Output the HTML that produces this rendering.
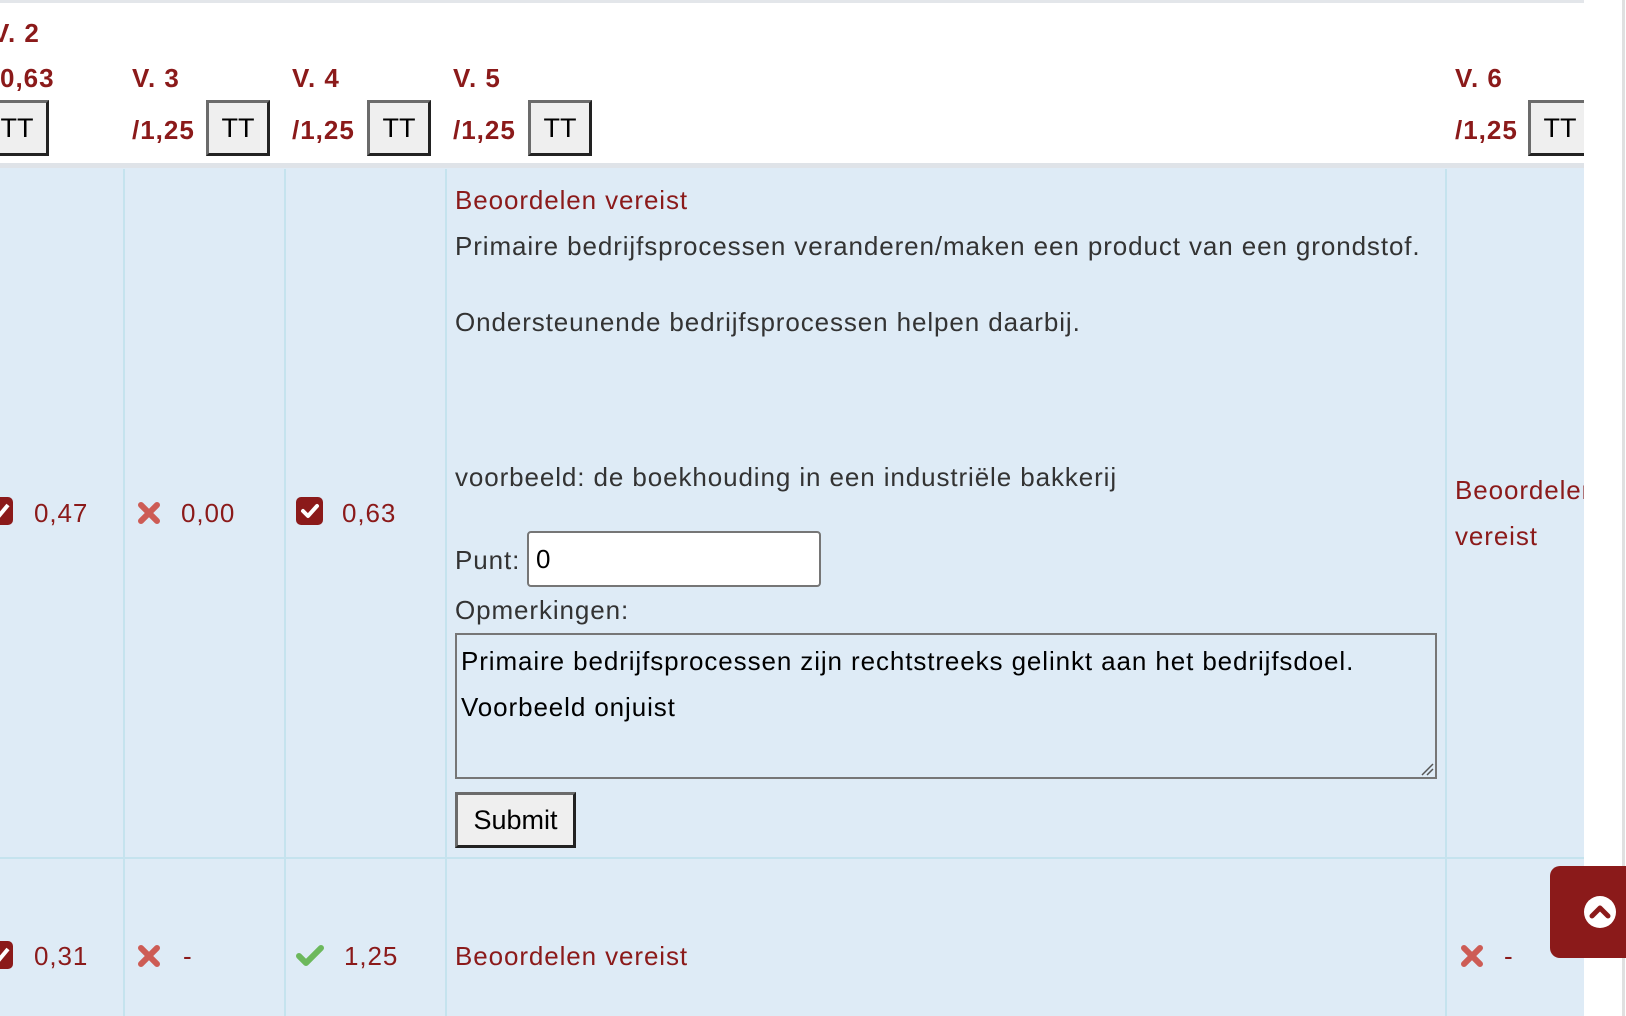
<!DOCTYPE html>
<html><head><meta charset="utf-8"><style>
body{margin:0;width:1626px;height:1016px;overflow:hidden;background:#fff;font-family:"Liberation Sans",sans-serif;position:relative}
.clip{position:absolute;left:0;top:0;width:1584px;height:1016px;overflow:hidden}
.a{position:absolute;white-space:nowrap}
.h{color:#8b1a1a;font-weight:bold;font-size:26px;line-height:30px;letter-spacing:1px}
.t{font-size:26px;line-height:30px;color:#333;letter-spacing:0.9px}
.r{color:#8b1a1a}
.btn{position:absolute;box-sizing:border-box;height:56px;width:64px;background:#efefef;border:3px solid;border-color:#6b6b6b #222 #222 #6b6b6b;font-size:27px;line-height:50px;text-align:center;color:#000}
.vl{position:absolute;top:169px;width:2px;height:847px;background:#c5e3ee}
</style></head><body>
<div class="clip">
<div class="a" style="left:0;top:0;width:1584px;height:3px;background:#e3e6ea"></div>
<div class="a" style="left:0;top:166px;width:1584px;height:850px;background:#deebf6"></div>
<div class="a" style="left:0;top:163px;width:1584px;height:5px;background:#dfe3e8"></div>
<div class="vl" style="left:123px"></div><div class="vl" style="left:284px"></div><div class="vl" style="left:445px"></div><div class="vl" style="left:1445px"></div>
<div class="a" style="left:0;top:857px;width:1584px;height:2px;background:#c5e3ee"></div>

<div class="a h" style="left:-8px;top:18px">V. 2</div>
<div class="a h" style="left:0;top:63px">0,63</div>
<div class="btn" style="left:-15px;top:100px">TT</div>
<div class="a h" style="left:132px;top:63px">V. 3</div>
<div class="a h" style="left:132px;top:115px">/1,25</div>
<div class="btn" style="left:206px;top:100px">TT</div>
<div class="a h" style="left:292px;top:63px">V. 4</div>
<div class="a h" style="left:292px;top:115px">/1,25</div>
<div class="btn" style="left:367px;top:100px">TT</div>
<div class="a h" style="left:453px;top:63px">V. 5</div>
<div class="a h" style="left:453px;top:115px">/1,25</div>
<div class="btn" style="left:528px;top:100px">TT</div>
<div class="a h" style="left:1455px;top:63px">V. 6</div>
<div class="a h" style="left:1455px;top:115px">/1,25</div>
<div class="btn" style="left:1528px;top:100px;width:64px">TT</div>

<div class="a" style="left:-14px;top:497px;width:27px;height:28px;border-radius:5px;background:#8b1a1a"></div>
<svg class="a" style="left:-4px;top:502px" width="14" height="18"><path d="M2 15L12 3" stroke="#fff" stroke-width="4"/></svg>
<div class="a t r" style="left:34px;top:498px">0,47</div>
<svg class="a" style="left:137px;top:501px" width="24" height="24"><path d="M4 4L20 20M20 4L4 20" stroke="#cd5c55" stroke-width="6" stroke-linecap="round"/></svg>
<div class="a t r" style="left:181px;top:498px">0,00</div>
<div class="a" style="left:296px;top:497px;width:27px;height:28px;border-radius:5px;background:#8b1a1a"></div>
<svg class="a" style="left:296px;top:497px" width="27" height="28"><path d="M7 14L12 19L21 9" fill="none" stroke="#fff" stroke-width="4" stroke-linecap="round" stroke-linejoin="round"/></svg>
<div class="a t r" style="left:342px;top:498px">0,63</div>

<div class="a t r" style="left:455px;top:185px">Beoordelen vereist</div>
<div class="a t" style="left:455px;top:231px">Primaire bedrijfsprocessen veranderen/maken een product van een grondstof.</div>
<div class="a t" style="left:455px;top:307px">Ondersteunende bedrijfsprocessen helpen daarbij.</div>
<div class="a t" style="left:455px;top:462px">voorbeeld: de boekhouding in een industriële bakkerij</div>
<div class="a t" style="left:455px;top:545px">Punt:</div>
<div class="a" style="left:527px;top:531px;width:294px;height:56px;box-sizing:border-box;border:2px solid #767676;border-radius:4px;background:#fff;font-size:26px;line-height:52px;padding-left:7px;color:#000">0</div>
<div class="a t" style="left:455px;top:595px">Opmerkingen:</div>
<div class="a" style="left:455px;top:633px;width:982px;height:146px;box-sizing:border-box;border:2px solid #767676;background:#deebf6;font-size:26px;line-height:46px;padding:3px 4px;color:#000;white-space:normal;letter-spacing:0.9px">Primaire bedrijfsprocessen zijn rechtstreeks gelinkt aan het bedrijfsdoel.<br>Voorbeeld onjuist</div>
<svg class="a" style="left:1420px;top:762px" width="14" height="14"><path d="M2 13L13 2M7 13L13 7" stroke="#555" stroke-width="1.5"/></svg>
<div class="a" style="left:455px;top:792px;width:121px;height:56px;box-sizing:border-box;background:#efefef;border:3px solid;border-color:#6b6b6b #222 #222 #6b6b6b;font-size:27px;line-height:50px;text-align:center;color:#000">Submit</div>

<div class="a t r" style="left:1455px;top:475px">Beoordelen</div>
<div class="a t r" style="left:1455px;top:521px">vereist</div>

<div class="a" style="left:-14px;top:941px;width:27px;height:28px;border-radius:5px;background:#8b1a1a"></div>
<svg class="a" style="left:-4px;top:946px" width="14" height="18"><path d="M2 15L12 3" stroke="#fff" stroke-width="4"/></svg>
<div class="a t r" style="left:34px;top:941px">0,31</div>
<svg class="a" style="left:137px;top:944px" width="24" height="24"><path d="M4 4L20 20M20 4L4 20" stroke="#cd5c55" stroke-width="6" stroke-linecap="round"/></svg>
<div class="a t r" style="left:183px;top:941px">-</div>
<svg class="a" style="left:295px;top:943px" width="30" height="24"><path d="M4 13L11 20L26 5" fill="none" stroke="#6cb85c" stroke-width="6" stroke-linecap="round" stroke-linejoin="round"/></svg>
<div class="a t r" style="left:344px;top:941px">1,25</div>
<div class="a t r" style="left:455px;top:941px">Beoordelen vereist</div>
<svg class="a" style="left:1460px;top:944px" width="24" height="24"><path d="M4 4L20 20M20 4L4 20" stroke="#cd5c55" stroke-width="6" stroke-linecap="round"/></svg>
<div class="a t r" style="left:1504px;top:941px">-</div>
</div>
<div class="a" style="left:1622px;top:0;width:3px;height:1016px;background:#e0e0e0"></div>
<div class="a" style="left:1550px;top:866px;width:76px;height:92px;background:#8b1a1a;border-radius:10px 0 0 10px"></div>
<svg class="a" style="left:1583px;top:895px" width="34" height="34"><circle cx="17" cy="17" r="16" fill="#fff"/><path d="M9 21L17 13L25 21" fill="none" stroke="#8b1a1a" stroke-width="5" stroke-linecap="round" stroke-linejoin="round"/></svg>
</body></html>
